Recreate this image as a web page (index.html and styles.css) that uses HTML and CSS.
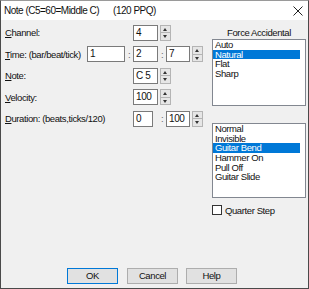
FILE: index.html
```html
<!DOCTYPE html>
<html>
<head>
<meta charset="utf-8">
<link rel="stylesheet" href="styles.css">
</head>
<body>
<div class="window">
  <div class="titlebar">
    <span class="title">Note (C5=60=Middle C)</span>
    <span class="ppq">(120 PPQ)</span>
    <span class="close"><svg width="10" height="10" viewBox="0 0 10 10"><path d="M0.5 0.5 L9.5 9.5 M9.5 0.5 L0.5 9.5" stroke="#222" stroke-width="1" fill="none"/></svg></span>
  </div>
  <div class="body">
    <div class="main">
      <div class="fields">
        <div class="label"><u>C</u>hannel:</div>
        <div class="box colD">4</div>
        <div class="spin spinE"><span class="up"></span><span class="down"></span></div>

        <div class="label"><u>T</u>ime: (bar/beat/tick)</div>
        <div class="box colB">1</div>
        <div class="colon colC">:</div>
        <div class="box colD">2</div>
        <div class="colon colE">:</div>
        <div class="box colF">7</div>
        <div class="spin colG"><span class="up"></span><span class="down"></span></div>

        <div class="label"><u>N</u>ote:</div>
        <div class="box colD">C 5</div>
        <div class="spin spinE"><span class="up"></span><span class="down"></span></div>

        <div class="label"><u>V</u>elocity:</div>
        <div class="box colD">100</div>
        <div class="spin spinE"><span class="up"></span><span class="down"></span></div>

        <div class="label wide"><u>D</u>uration: (beats,ticks/120)</div>
        <div class="box colD short">0</div>
        <div class="colon colE">:</div>
        <div class="box colF">100</div>
        <div class="spin colG"><span class="up"></span><span class="down"></span></div>
      </div>
      <div class="side">
        <div class="heading">Force Accidental</div>
        <div class="list list1">
          <div class="item">Auto</div>
          <div class="item sel">Natural</div>
          <div class="item">Flat</div>
          <div class="item">Sharp</div>
        </div>
        <div class="list list2">
          <div class="item">Normal</div>
          <div class="item">Invisible</div>
          <div class="item sel">Guitar Bend</div>
          <div class="item">Hammer On</div>
          <div class="item">Pull Off</div>
          <div class="item">Guitar Slide</div>
        </div>
        <div class="check"><span class="cbox"></span><span>Quarter Step</span></div>
      </div>
    </div>
    <div class="buttons">
      <div class="btn default">OK</div>
      <div class="btn">Cancel</div>
      <div class="btn">Help</div>
    </div>
  </div>
</div>
</body>
</html>
```
FILE: styles.css
```css
html, body {
  margin: 0;
  padding: 0;
  background: #f0f0f0;
}
.window {
  width: 309px;
  height: 289px;
  box-sizing: border-box;
  border: 1px solid #4a4a4a;
  border-top-color: #9a9a9a;
  display: flex;
  flex-direction: column;
  font-family: "Liberation Sans", Arial, sans-serif;
  font-size: 9.5px;
  letter-spacing: -0.4px;
  color: #111;
  overflow: hidden;
}
.titlebar {
  height: 19px;
  background: #fff;
  display: flex;
  align-items: center;
  font-size: 10px;
  letter-spacing: -0.5px;
  padding-left: 3px;
}
.ppq {
  margin-left: 14px;
}
.close {
  margin-left: auto;
  margin-right: 5px;
  display: flex;
}
.body {
  flex: 1;
  display: flex;
  flex-direction: column;
  background: #f0f0f0;
}
.main {
  flex: 1;
  display: flex;
}
.fields {
  width: 211px;
  box-sizing: border-box;
  padding-left: 4px;
  padding-top: 2px;
  display: grid;
  grid-template-columns: 82px 38px 8px 25px 8px 24px 13px;
  grid-auto-rows: 21.5px;
  align-items: center;
  align-content: start;
}
.label {
  grid-column: 1;
  white-space: nowrap;
}
.label.wide {
  grid-column: 1 / 4;
}
.box {
  height: 16px;
  box-sizing: border-box;
  background: #fff;
  border: 1px solid #7a7a7a;
  padding-left: 2px;
  line-height: 14px;
  font-size: 10px;
}
.box.short { width: 20px; }
.colB { grid-column: 2; }
.colC { grid-column: 3; }
.colD { grid-column: 4; }
.colE { grid-column: 5; }
.colF { grid-column: 6; }
.colG { grid-column: 7; margin-left: 2px; }
.spinE { grid-column: 5 / 7; margin-left: 2px; }
.colon {
  text-align: center;
  color: #666;
}
.spin {
  width: 11px;
  height: 16px;
  display: flex;
  flex-direction: column;
}
.spin span {
  flex: 1;
  background: #e6e6e6;
  border: 1px solid #b4b4b4;
  position: relative;
}
.spin .down { border-top: none; }
.spin .up::after, .spin .down::after {
  content: "";
  position: absolute;
  left: 2px;
  width: 0;
  height: 0;
  border-left: 2.5px solid transparent;
  border-right: 2.5px solid transparent;
}
.spin .up::after {
  top: 2px;
  border-bottom: 3px solid #333;
}
.spin .down::after {
  top: 2px;
  border-top: 3px solid #333;
}
.side {
  width: 94px;
  padding-top: 7px;
  display: flex;
  flex-direction: column;
}
.heading {
  line-height: 12px;
  text-align: center;
}
.list {
  box-sizing: border-box;
  background: #fff;
  border: 1px solid #828790;
  padding: 0 5px 0 0;
}
.list1 { height: 67px; }
.list2 { height: 75px; margin-top: 17px; }
.item {
  line-height: 9.7px;
  height: 9.7px;
  padding-left: 2px;
  white-space: nowrap;
}
.item.sel {
  background: #0078d7;
  color: #fff;
}
.check {
  margin-top: 7px;
  display: flex;
  align-items: center;
  gap: 3px;
  height: 10px;
}
.cbox {
  width: 10px;
  height: 10px;
  box-sizing: border-box;
  border: 1px solid #333;
  background: #fff;
}
.buttons {
  display: flex;
  padding-left: 66px;
  padding-bottom: 4px;
  gap: 8px;
}
.btn {
  width: 51px;
  height: 16px;
  box-sizing: border-box;
  background: #e1e1e1;
  border: 1px solid #adadad;
  text-align: center;
  line-height: 14px;
}
.btn.default {
  border-color: #0078d7;
  margin-right: 1px;
}
```
